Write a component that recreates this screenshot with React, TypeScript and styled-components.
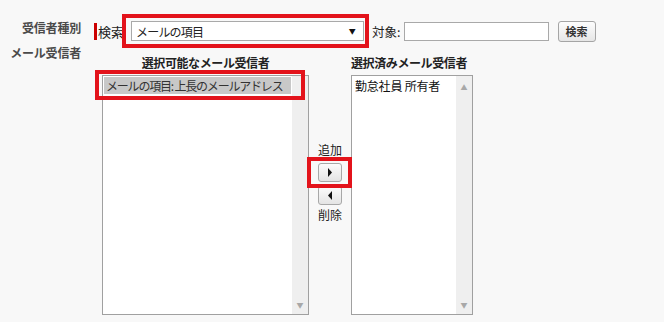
import React from "react";
import styled, { createGlobalStyle } from "styled-components";

const GlobalStyle = createGlobalStyle`
  html, body {
    margin: 0;
    padding: 0;
    background: #f8f8f8;
  }
  body {
    font-family: "Noto Sans CJK JP", "Noto Sans", sans-serif;
    color: #222;
  }
`;

const Page = styled.div`
  width: 664px;
  height: 322px;
  padding-top: 17px;
  box-sizing: border-box;
  overflow: hidden;
`;

const FieldRow = styled.div`
  display: grid;
  grid-template-columns: 81px 1fr;
`;

const Label = styled.div<{ $top: number }>`
  text-align: right;
  font-size: 12px;
  line-height: 14px;
  font-weight: 700;
  color: #4a4a4a;
  padding-top: ${(p) => p.$top}px;
  letter-spacing: -0.2px;
`;

const SearchBar = styled.div`
  display: flex;
  align-items: center;
  height: 28px;
  margin-left: 13px;
  font-size: 13px;
`;

const RequiredMark = styled.span`
  width: 3px;
  height: 17px;
  background: #c00;
  margin-right: 1px;
`;

const Annotated = styled.div`
  position: relative;
`;

const RedFrame = styled.div<{ $inset: string }>`
  position: absolute;
  z-index: 2;
  inset: ${(p) => p.$inset};
  border: 4px solid #e3131b;
  pointer-events: none;
`;

const SelectBox = styled.div`
  width: 233px;
  height: 20px;
  margin-left: 7px;
  box-sizing: border-box;
  background: #fff;
  border: 1px solid #a9a9a9;
  display: flex;
  align-items: center;
  justify-content: space-between;
  padding: 0 8px 0 4px;
  font-size: 12px;
  letter-spacing: -0.8px;
`;

const Caret = styled.span`
  font-size: 7px;
  color: #111;
`;

const TargetLabel = styled.span`
  margin-left: 8px;
  margin-right: 3px;
  font-size: 12.5px;
`;

const TextInput = styled.div`
  width: 145px;
  height: 19px;
  box-sizing: border-box;
  background: #fff;
  border: 1px solid #a9a9a9;
`;

const SearchButton = styled.button`
  margin-left: 9px;
  width: 38px;
  height: 21px;
  padding: 0;
  border: 1px solid #a5a5a5;
  border-radius: 3px;
  background: linear-gradient(#fdfdfd, #e6e6e6);
  font-family: inherit;
  font-size: 11px;
  font-weight: 700;
  color: #333;
`;

const DualList = styled.div`
  display: flex;
  margin-left: 21px;
`;

const ListColumn = styled.div<{ $width: number }>`
  width: ${(p) => p.$width}px;
  display: flex;
  flex-direction: column;
`;

const ListHeading = styled.div<{ $align: string }>`
  font-size: 12px;
  line-height: 14px;
  font-weight: 700;
  color: #222;
  text-align: ${(p) => p.$align};
  margin-top: 11px;
  height: 19px;
  letter-spacing: -0.4px;
  white-space: nowrap;
`;

const ListBox = styled.div`
  position: relative;
  height: 240px;
  box-sizing: border-box;
  background: #fff;
  border: 1px solid #a0a0a0;
  display: grid;
  grid-template-columns: 1fr 16px;
`;

const Options = styled.div`
  padding: 1px;
  font-size: 12px;
  line-height: 17px;
  white-space: nowrap;
  min-width: 0;
`;

const Option = styled.div<{ $selected?: boolean }>`
  padding-left: 2px;
  background: ${(p) => (p.$selected ? "#c8c8c8" : "transparent")};
  color: ${(p) => (p.$selected ? "#333" : "#111")};
  letter-spacing: ${(p) => (p.$selected ? "-1.2px" : "-0.2px")};
  overflow: hidden;
`;

const ScrollTrack = styled.div`
  background: #efefef;
  display: flex;
  flex-direction: column;
  justify-content: space-between;
  align-items: center;
  padding: 6px 0 4px;
  font-size: 7px;
  color: #a8a8a8;
`;

const MoveColumn = styled.div`
  width: 42px;
  display: flex;
  flex-direction: column;
  align-items: center;
  padding-top: 148px;
  font-size: 12px;
  line-height: 14px;
  color: #222;
`;

const MoveButton = styled.button<{ $top: number }>`
  width: 24px;
  height: 19px;
  margin-top: ${(p) => p.$top}px;
  padding: 0;
  border: 1px solid #a8a8a8;
  border-radius: 3px;
  background: linear-gradient(#fcfcfc, #e4e4e4);
  display: flex;
  align-items: center;
  justify-content: center;
`;

const MoveLabel = styled.div<{ $top: number }>`
  margin-top: ${(p) => p.$top}px;
`;

function Arrow({ dir }: { dir: "left" | "right" }) {
  return (
    <svg width="6" height="9" viewBox="0 0 6 9">
      {dir === "right" ? (
        <polygon points="1,0 5,4.5 1,9" fill="#111" />
      ) : (
        <polygon points="5,0 1,4.5 5,9" fill="#111" />
      )}
    </svg>
  );
}

export default function App() {
  return (
    <Page>
      <GlobalStyle />
      <FieldRow>
        <Label $top={4}>受信者種別</Label>
        <SearchBar>
          <RequiredMark />
          <span>検索</span>
          <Annotated>
            <SelectBox>
              メールの項目<Caret>▼</Caret>
            </SelectBox>
            <RedFrame $inset="-7px -5px -7px -2px" />
          </Annotated>
          <TargetLabel>対象:</TargetLabel>
          <TextInput />
          <SearchButton>検索</SearchButton>
        </SearchBar>
      </FieldRow>
      <FieldRow>
        <Label $top={1}>メール受信者</Label>
        <DualList>
          <ListColumn $width={207}>
            <ListHeading $align="center">選択可能なメール受信者</ListHeading>
            <ListBox>
              <Options>
                <Annotated>
                  <Option $selected>メールの項目: 上長のメールアドレス</Option>
                  <RedFrame $inset="-7px -14px -6px -9px" />
                </Annotated>
              </Options>
              <ScrollTrack>
                <span />
                <span>▼</span>
              </ScrollTrack>
            </ListBox>
          </ListColumn>
          <MoveColumn>
            <MoveLabel $top={-50}>追加</MoveLabel>
            <Annotated>
              <MoveButton $top={6}>
                <Arrow dir="right" />
              </MoveButton>
              <RedFrame $inset="0px -10px -6px -11px" />
            </Annotated>
            <MoveButton $top={4}>
              <Arrow dir="left" />
            </MoveButton>
            <MoveLabel $top={3}>削除</MoveLabel>
          </MoveColumn>
          <ListColumn $width={122}>
            <ListHeading $align="left">選択済みメール受信者</ListHeading>
            <ListBox>
              <Options>
                <Option>勤怠社員 所有者</Option>
              </Options>
              <ScrollTrack>
                <span>▲</span>
                <span>▼</span>
              </ScrollTrack>
            </ListBox>
          </ListColumn>
        </DualList>
      </FieldRow>
    </Page>
  );
}
